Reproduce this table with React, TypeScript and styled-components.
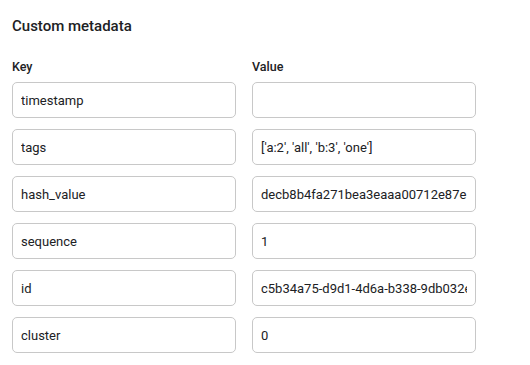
import { Fragment } from 'react'
import styled, { createGlobalStyle } from 'styled-components'

const GlobalStyle = createGlobalStyle`
  body {
    margin: 0;
    background: #ffffff;
    font-family: Roboto, 'Noto Sans', Arial, sans-serif;
    color: #202124;
  }
`

const Section = styled.section`
  padding: 16px 12px;
`

const Title = styled.h2`
  font-size: 15px;
  font-weight: 500;
  line-height: 20px;
  margin: 0 0 23px;
  color: #202124;
`

const Grid = styled.div`
  display: grid;
  grid-template-columns: 224px 224px;
  column-gap: 16px;
  row-gap: 11px;
`

const ColumnLabel = styled.div`
  font-size: 12.5px;
  font-weight: 500;
  line-height: 16px;
  margin-bottom: -4px;
  color: #202124;
`

const Field = styled.input`
  box-sizing: border-box;
  width: 100%;
  height: 36px;
  padding: 0 8px;
  border: 1px solid #c8c8c8;
  border-radius: 5px;
  font-family: Roboto, 'Noto Sans', Arial, sans-serif;
  font-size: 13px;
  color: #202124;
  background: #ffffff;
  outline: none;
`

interface MetaEntry {
  key: string
  value: string
}

const entries: MetaEntry[] = [
  { key: 'timestamp', value: '' },
  { key: 'tags', value: "['a:2', 'all', 'b:3', 'one']" },
  { key: 'hash_value', value: 'decb8b4fa271bea3eaaa00712e87e' },
  { key: 'sequence', value: '1' },
  { key: 'id', value: 'c5b34a75-d9d1-4d6a-b338-9db032e1f0a7' },
  { key: 'cluster', value: '0' }
]

function App (): JSX.Element {
  return (
    <>
      <GlobalStyle />
      <Section>
        <Title>Custom metadata</Title>
        <Grid>
          <ColumnLabel>Key</ColumnLabel>
          <ColumnLabel>Value</ColumnLabel>
          {entries.map((entry) => (
            <Fragment key={entry.key}>
              <Field readOnly value={entry.key} />
              <Field readOnly value={entry.value} />
            </Fragment>
          ))}
        </Grid>
      </Section>
    </>
  )
}

export default App
